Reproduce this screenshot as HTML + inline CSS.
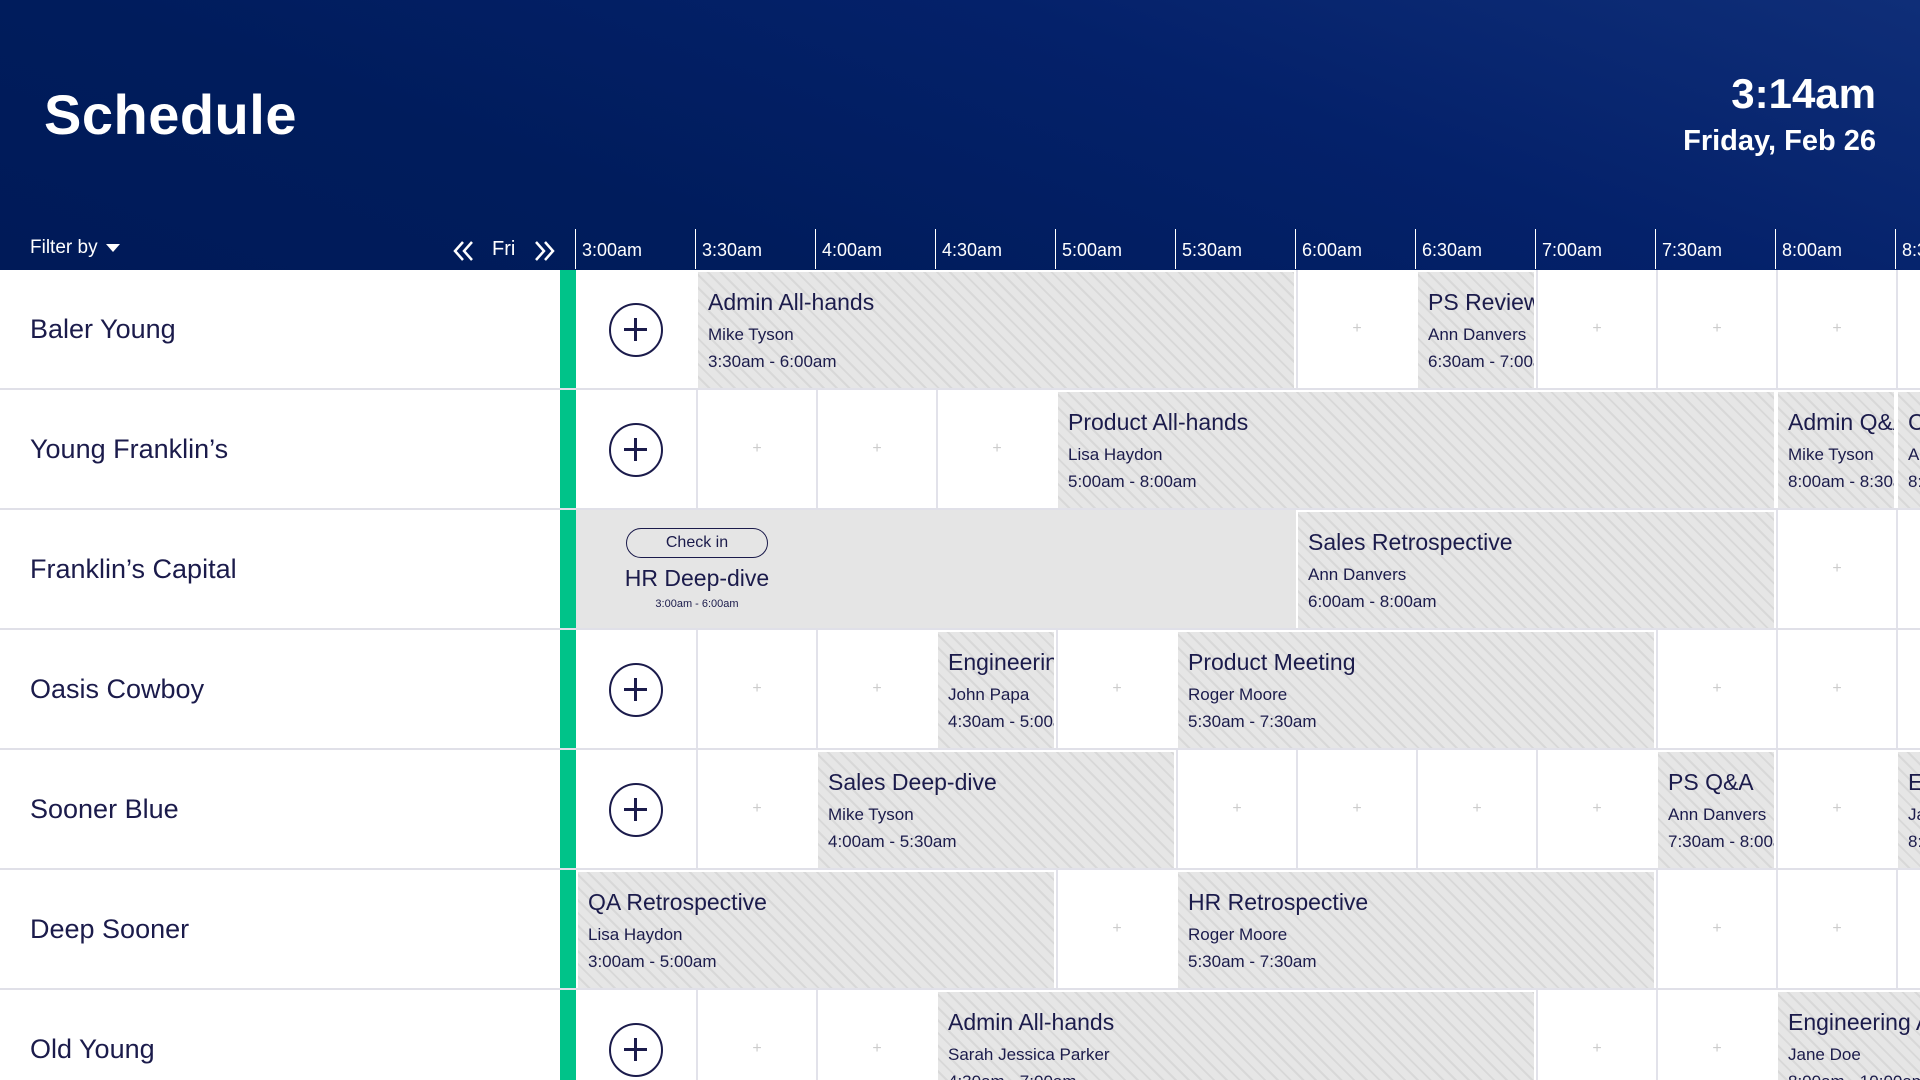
<!DOCTYPE html>
<html><head><meta charset="utf-8"><style>
*{margin:0;padding:0;box-sizing:border-box}
html,body{width:1920px;height:1080px;overflow:hidden}
body{font-family:"Liberation Sans",sans-serif;background:#fff;position:relative;color:#1b1b4b}
#wrap{position:absolute;left:0;top:0;width:1920px;height:1080px;overflow:hidden}
.hdr{position:absolute;left:0;top:0;width:1920px;height:270px;background:linear-gradient(200deg,#0f2e78 0%,#04216a 35%,#001c5c 70%,#001a58 100%);overflow:hidden}
.title{position:absolute;left:44px;top:82px;font-size:56px;color:#fff;font-weight:bold;letter-spacing:0.5px}
.clock{position:absolute;right:44px;top:70px;font-size:42px;color:#fff;text-align:right;font-weight:bold}
.date{position:absolute;right:44px;top:125px;font-size:29px;color:#fff;font-weight:bold}
.filt{position:absolute;left:30px;top:237px;font-size:19px;color:#fff}
.tri{display:inline-block;width:0;height:0;border-left:7px solid transparent;border-right:7px solid transparent;border-top:8px solid #fff;margin-left:8px;vertical-align:middle}
.th{position:absolute;top:229px;height:40px;border-left:1.5px solid #fff;color:#fff;font-size:18px;padding:11px 0 0 6px;width:120px}
.row{position:absolute;left:0;width:1920px;height:120px;border-bottom:2px solid #e0e0e8;overflow:hidden}
.name{position:absolute;left:30px;top:44px;font-size:27px}
.green{position:absolute;left:560px;width:16px;top:0;height:120px;background:#00c389}
.cell{position:absolute;top:0;width:120px;height:120px;border-left:2px solid #e2e2ea;text-align:center;line-height:118px;color:#ccc;font-size:16px}
.ev{position:absolute;top:2px;height:116px;background:repeating-linear-gradient(45deg,#e6e6e6 0 7px,#d8d8d8 7px 9px);padding:17px 0 0 10px;overflow:hidden;white-space:nowrap}
.ev b{display:block;font-weight:normal;font-size:23px;margin-bottom:5px}
.ev i{display:block;font-style:normal;font-size:17px;line-height:27px}
.plus{position:absolute;left:33px;top:33px;width:54px;height:54px;border:2.5px solid #1b1b4b;border-radius:50%}
.plus:before{content:"";position:absolute;left:13px;top:23px;width:23px;height:3px;background:#1b1b4b}
.plus:after{content:"";position:absolute;left:23px;top:13px;width:3px;height:23px;background:#1b1b4b}
</style></head><body><div id="wrap">
<div class="hdr">
<div class="title">Schedule</div>
<div class="clock">3:14am</div>
<div class="date">Friday, Feb 26</div>
<div class="filt">Filter by<span class="tri"></span></div>
<svg style="position:absolute;left:452px;top:240px" width="24" height="22" viewBox="0 0 24 22"><path d="M11 2 L3 11 L11 20 M20 2 L12 11 L20 20" stroke="#fff" stroke-width="2.5" fill="none"/></svg>
<div style="position:absolute;left:492px;top:238px;color:#fff;font-size:20px">Fri</div>
<svg style="position:absolute;left:532px;top:240px" width="24" height="22" viewBox="0 0 24 22"><path d="M4 2 L12 11 L4 20 M13 2 L21 11 L13 20" stroke="#fff" stroke-width="2.5" fill="none"/></svg>
<div class="th" style="left:575px">3:00am</div><div class="th" style="left:695px">3:30am</div><div class="th" style="left:815px">4:00am</div><div class="th" style="left:935px">4:30am</div><div class="th" style="left:1055px">5:00am</div><div class="th" style="left:1175px">5:30am</div><div class="th" style="left:1295px">6:00am</div><div class="th" style="left:1415px">6:30am</div><div class="th" style="left:1535px">7:00am</div><div class="th" style="left:1655px">7:30am</div><div class="th" style="left:1775px">8:00am</div><div class="th" style="left:1895px;width:25px;overflow:hidden">8:30am</div>
</div>

<div class="row" style="top:270px"><div class="name">Baler Young</div><div class="green"></div>
<div class="cell" style="left:576px;border-left:none"><div class="plus"></div></div>
<div class="cell" style="left:1296px">+</div><div class="cell" style="left:1536px">+</div><div class="cell" style="left:1656px">+</div><div class="cell" style="left:1776px">+</div><div class="cell" style="left:1896px">+</div>
<div class="ev" style="left:698px;width:596px"><b>Admin All-hands</b><i>Mike Tyson</i><i>3:30am - 6:00am</i></div>
<div class="ev" style="left:1418px;width:116px"><b>PS Review</b><i>Ann Danvers</i><i>6:30am - 7:00am</i></div>
</div>

<div class="row" style="top:390px"><div class="name">Young Franklin’s</div><div class="green"></div>
<div class="cell" style="left:576px;border-left:none"><div class="plus"></div></div>
<div class="cell" style="left:696px">+</div><div class="cell" style="left:816px">+</div><div class="cell" style="left:936px">+</div>
<div class="ev" style="left:1058px;width:716px"><b>Product All-hands</b><i>Lisa Haydon</i><i>5:00am - 8:00am</i></div>
<div class="ev" style="left:1778px;width:116px"><b>Admin Q&amp;A</b><i>Mike Tyson</i><i>8:00am - 8:30am</i></div>
<div class="ev" style="left:1898px;width:116px"><b>Conf</b><i>Ann</i><i>8:30am</i></div>
</div>

<div class="row" style="top:510px"><div class="name">Franklin’s Capital</div><div class="green"></div>
<div class="cell" style="left:1776px">+</div><div class="cell" style="left:1896px">+</div>
<div style="position:absolute;left:576px;top:0;width:720px;height:118px;background:#e5e5e5"></div>
<div style="position:absolute;left:626px;top:18px;width:142px;height:30px;border:1.5px solid #1b1b4b;border-radius:15px;text-align:center;font-size:16px;line-height:27px">Check in</div>
<div style="position:absolute;left:596px;top:55px;width:202px;text-align:center;font-size:23px;white-space:nowrap">HR Deep-dive</div>
<div style="position:absolute;left:626px;top:88px;width:142px;text-align:center;font-size:11px">3:00am - 6:00am</div>
<div class="ev" style="left:1298px;width:476px"><b>Sales Retrospective</b><i>Ann Danvers</i><i>6:00am - 8:00am</i></div>
</div>

<div class="row" style="top:630px"><div class="name">Oasis Cowboy</div><div class="green"></div>
<div class="cell" style="left:576px;border-left:none"><div class="plus"></div></div>
<div class="cell" style="left:696px">+</div><div class="cell" style="left:816px">+</div><div class="cell" style="left:1056px">+</div><div class="cell" style="left:1656px">+</div><div class="cell" style="left:1776px">+</div><div class="cell" style="left:1896px">+</div>
<div class="ev" style="left:938px;width:116px"><b>Engineering</b><i>John Papa</i><i>4:30am - 5:00am</i></div>
<div class="ev" style="left:1178px;width:476px"><b>Product Meeting</b><i>Roger Moore</i><i>5:30am - 7:30am</i></div>
</div>

<div class="row" style="top:750px"><div class="name">Sooner Blue</div><div class="green"></div>
<div class="cell" style="left:576px;border-left:none"><div class="plus"></div></div>
<div class="cell" style="left:696px">+</div><div class="cell" style="left:1176px">+</div><div class="cell" style="left:1296px">+</div><div class="cell" style="left:1416px">+</div><div class="cell" style="left:1536px">+</div><div class="cell" style="left:1776px">+</div>
<div class="ev" style="left:818px;width:356px"><b>Sales Deep-dive</b><i>Mike Tyson</i><i>4:00am - 5:30am</i></div>
<div class="ev" style="left:1658px;width:116px"><b>PS Q&amp;A</b><i>Ann Danvers</i><i>7:30am - 8:00am</i></div>
<div class="ev" style="left:1898px;width:116px"><b>Eng</b><i>Jane</i><i>8:30am</i></div>
</div>

<div class="row" style="top:870px"><div class="name">Deep Sooner</div><div class="green"></div>
<div class="cell" style="left:1056px">+</div><div class="cell" style="left:1656px">+</div><div class="cell" style="left:1776px">+</div><div class="cell" style="left:1896px">+</div>
<div class="ev" style="left:578px;width:476px"><b>QA Retrospective</b><i>Lisa Haydon</i><i>3:00am - 5:00am</i></div>
<div class="ev" style="left:1178px;width:476px"><b>HR Retrospective</b><i>Roger Moore</i><i>5:30am - 7:30am</i></div>
</div>

<div class="row" style="top:990px"><div class="name">Old Young</div><div class="green"></div>
<div class="cell" style="left:576px;border-left:none"><div class="plus"></div></div>
<div class="cell" style="left:696px">+</div><div class="cell" style="left:816px">+</div><div class="cell" style="left:1536px">+</div><div class="cell" style="left:1656px">+</div>
<div class="ev" style="left:938px;width:596px"><b>Admin All-hands</b><i>Sarah Jessica Parker</i><i>4:30am - 7:00am</i></div>
<div class="ev" style="left:1778px;width:240px"><b>Engineering All-hands</b><i>Jane Doe</i><i>8:00am - 10:00am</i></div>
</div>
</div></body></html>
